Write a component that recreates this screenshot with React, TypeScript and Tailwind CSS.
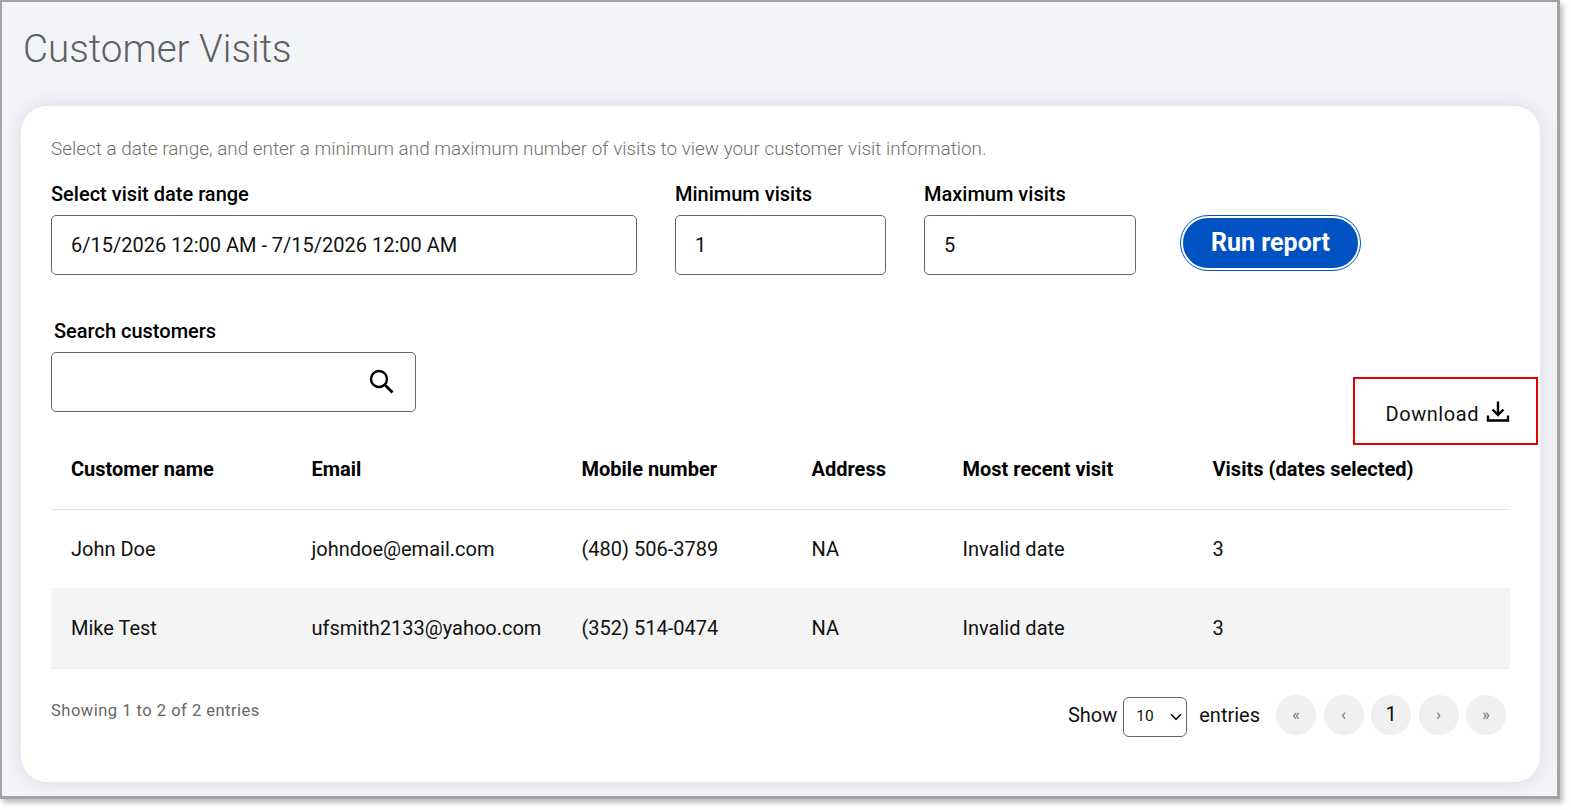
import React from 'react';
import { ChevronDown } from 'lucide-react';

const rows = [
  { name: 'John Doe', email: 'johndoe@email.com', mobile: '(480) 506-3789', address: 'NA', recent: 'Invalid date', visits: '3' },
  { name: 'Mike Test', email: 'ufsmith2133@yahoo.com', mobile: '(352) 514-0474', address: 'NA', recent: 'Invalid date', visits: '3' },
];

const headers = ['Customer name', 'Email', 'Mobile number', 'Address', 'Most recent visit', 'Visits (dates selected)'];

const pages = ['«', '‹', '1', '›', '»'];

function Field({ label, value, className }: { label: string; value: string; className: string }) {
  return (
    <div className={className}>
      <div className="text-[20px] leading-[24px] font-medium text-black">{label}</div>
      <div className="mt-[9px] h-[60px] flex items-center px-[19px] border border-[#666] rounded-[5px] text-[20px] text-[#111]">
        {value}
      </div>
    </div>
  );
}

export default function App() {
  return (
    <div className="w-[1571px] h-[810px] bg-white overflow-hidden font-['Roboto',sans-serif]">
      <div className="w-[1560px] h-[799px] border-2 border-b-[3px] border-r-[3px] border-[#a3a3a3] bg-[#f3f4f8] shadow-[3px_4px_5px_rgba(0,0,0,0.25)] px-[19px] pt-[24px]">
        <h1 className="text-[38.6px] leading-[46px] font-light text-[#5f5f5f] ml-[2px]">Customer Visits</h1>

        <div className="mt-[34px] h-[676px] w-[1519px] bg-white rounded-[26px] shadow-[0_0_18px_rgba(90,95,120,0.16)] px-[30px] pt-[31px]">
          <p className="text-[18.9px] leading-[24px] font-light text-[#6f6f6f]">
            Select a date range, and enter a minimum and maximum number of visits to view your customer visit information.
          </p>

          <div className="mt-[21px] flex items-start">
            <Field label="Select visit date range" value="6/15/2026 12:00 AM - 7/15/2026 12:00 AM" className="w-[586px]" />
            <Field label="Minimum visits" value="1" className="ml-[38px] w-[211px]" />
            <Field label="Maximum visits" value="5" className="ml-[38px] w-[212px]" />
            <button className="ml-[45px] mt-[34px] w-[179px] h-[54px] rounded-full bg-[#0052c2] border-2 border-white outline outline-1 outline-[#0052c2] text-white text-[25px] font-bold">
              Run report
            </button>
          </div>

          <div className="mt-[44px] flex items-end justify-between">
            <div className="w-[365px]">
              <div className="ml-[3px] text-[20px] leading-[24px] font-medium text-black">Search customers</div>
              <div className="mt-[9px] h-[60px] flex items-center justify-end pr-[21px] border border-[#666] rounded-[5px]">
                <svg width="26" height="26" viewBox="0 0 26 26" fill="none" stroke="#000" strokeWidth="2.4" className="mt-[-3px]">
                  <circle cx="11" cy="11" r="8" />
                  <path d="M17 17l7.5 7.5" strokeWidth="2.8" />
                </svg>
              </div>
            </div>
            <div className="relative mr-0 mb-[-14px] flex items-center gap-[7px] text-[20px] leading-[24px] tracking-[0.55px] text-[#111]">
              Download
              <svg width="24" height="24" viewBox="0 0 24 24" fill="none" stroke="#000" strokeWidth="2.4" className="mt-[-5px]">
                <path d="M12 1.500V15M6.500 9.500L12 15l5.500-5.500" />
                <path d="M2 15.500V20.500H22V15.500" />
              </svg>
              <div className="absolute left-[-33px] top-[-25px] w-[185px] h-[68px] border-2 border-[#e60000]" />
            </div>
          </div>

          <table className="mt-[15px] w-[1459px] table-fixed border-collapse text-[20px] text-[#111]">
            <colgroup>
              <col className="w-[240.5px]" />
              <col className="w-[270px]" />
              <col className="w-[230px]" />
              <col className="w-[151px]" />
              <col className="w-[250px]" />
              <col className="w-[317.5px]" />
            </colgroup>
            <thead>
              <tr className="h-[82px] border-b border-[#e3e3e3]">
                {headers.map((h) => (
                  <th key={h} className="pl-[20px] text-left font-bold text-black pt-[2px] whitespace-nowrap">{h}</th>
                ))}
              </tr>
            </thead>
            <tbody>
              {rows.map((r, i) => (
                <tr key={r.name} className={i % 2 === 1 ? 'h-[80px] bg-[#f4f4f4] border-b border-[#ebebeb]' : 'h-[79px]'}>
                  <td className="pl-[20px]">{r.name}</td>
                  <td className="pl-[20px] whitespace-nowrap">{r.email}</td>
                  <td className="pl-[20px]">{r.mobile}</td>
                  <td className="pl-[20px]">{r.address}</td>
                  <td className="pl-[20px]">{r.recent}</td>
                  <td className="pl-[20px]">{r.visits}</td>
                </tr>
              ))}
            </tbody>
          </table>

          <div className="mt-[26px] flex items-start justify-between">
            <div className="mt-[4px] text-[16.5px] leading-[24px] tracking-[0.5px] text-[#666]">Showing 1 to 2 of 2 entries</div>
            <div className="flex items-center text-[20px] text-[#111] mr-[4px]">
              <span>Show</span>
              <div className="ml-[6px] mt-[2px] mb-[-2px] w-[64px] h-[40px] flex items-center justify-between pl-[12px] pr-[1px] border border-[#666] rounded-[6px] text-[15.5px]">
                10
                <ChevronDown className="w-[18px] h-[18px] text-black" strokeWidth={2.2} />
              </div>
              <span className="ml-[12px]">entries</span>
              <div className="ml-[16px] flex gap-[7.500px]">
                {pages.map((p) => (
                  <div
                    key={p}
                    className={p === '1'
                      ? 'w-[40px] h-[40px] rounded-full bg-[#f0f0f0] flex items-center justify-center text-[20px] text-[#111] pb-[2px]'
                      : 'w-[40px] h-[40px] rounded-full bg-[#f0f0f0] flex items-center justify-center text-[17px] text-[#777]'}
                  >
                    {p}
                  </div>
                ))}
              </div>
            </div>
          </div>
        </div>
      </div>
    </div>
  );
}
